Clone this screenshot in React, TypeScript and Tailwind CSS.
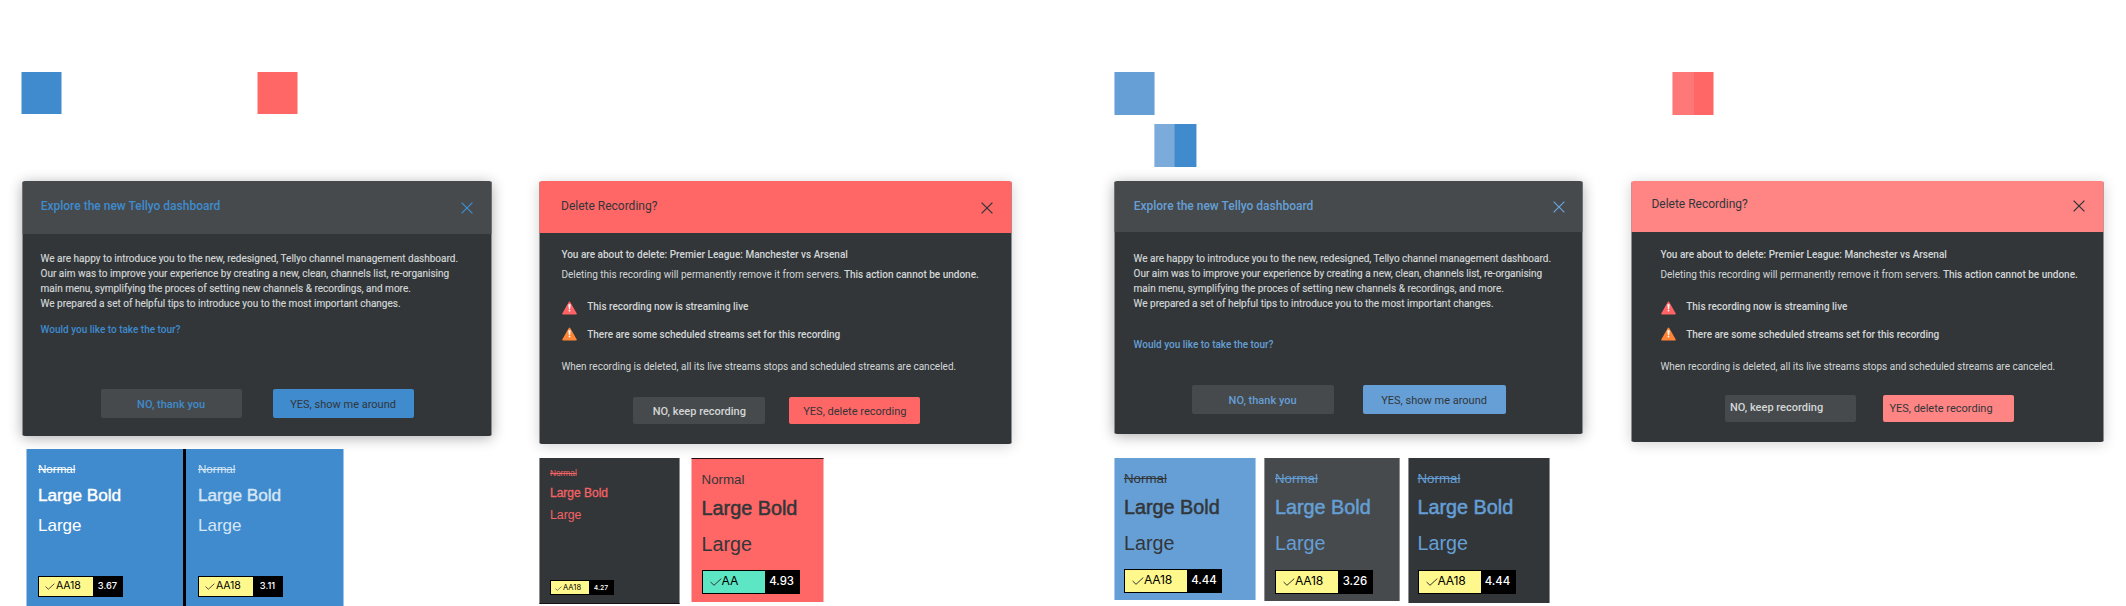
import type { ReactNode } from "react";
import clsx from "clsx";

function CloseIcon({ className }: { className: string }) {
  return (
    <svg viewBox="0 0 12 12" className={clsx("h-3 w-3 shrink-0", className)} fill="none" stroke="currentColor" strokeWidth="1.3">
      <path d="M0.6 0.6 11.4 11.4M11.4 0.6 0.6 11.4" />
    </svg>
  );
}

function WarningIcon({ className }: { className: string }) {
  return (
    <svg viewBox="0 0 15 14" className={clsx("-mb-1 h-3.5 w-[15px] shrink-0", className)}>
      <path d="M6.8 1.1Q7.5 0.1 8.2 1.1L14.6 12.2Q15 13.4 13.8 13.4H1.2Q0 13.4 0.4 12.2Z" fill="currentColor" />
      <path d="M6.3 3.2H8.7L8.1 8.2H6.9Z" fill="#fff" />
      <circle cx="7.5" cy="9.6" r="0.9" fill="#fff" />
    </svg>
  );
}

function Dialog({
  className,
  headerClass,
  title,
  titleClass,
  closeClass,
  bodyClass,
  children,
}: {
  className: string;
  headerClass: string;
  title: string;
  titleClass: string;
  closeClass: string;
  bodyClass: string;
  children: ReactNode;
}) {
  return (
    <section className={clsx("flex flex-col overflow-hidden rounded-[3px]", className)}>
      <header className={clsx("flex shrink-0 items-start justify-between border-x", headerClass)}>
        <h2 className={clsx("text-[12px] leading-4", titleClass)}>{title}</h2>
        <CloseIcon className={closeClass} />
      </header>
      <div
        className={clsx(
          "flex grow flex-col border-x border-[#8b8e90] bg-[#323639] text-[10px] leading-[15px] whitespace-nowrap text-[#d3d6d7]",
          bodyClass,
        )}
      >
        {children}
      </div>
    </section>
  );
}

function Button({ className, children }: { className: string; children: ReactNode }) {
  return <button className={clsx("rounded-[2px] text-[11px] leading-[15px]", className)}>{children}</button>;
}

function Intro() {
  return (
    <p className="[-webkit-text-stroke:0.15px_currentColor]">
      We are happy to introduce you to the new, redesigned, Tellyo channel management dashboard.
      <br />
      Our aim was to improve your experience by creating a new, clean, channels list, re-organising
      <br />
      main menu, symplifying the proces of setting new channels &amp; recordings, and more.
      <br />
      We prepared a set of helpful tips to introduce you to the most important changes.
    </p>
  );
}

function DeleteDetails() {
  return (
    <>
      <p className="font-medium">You are about to delete: Premier League: Manchester vs Arsenal</p>
      <p className="mt-[5px]">
        Deleting this recording will permanently remove it from servers.{" "}
        <span className="font-medium">This action cannot be undone.</span>
      </p>
      <p className="mt-[17px] flex items-start gap-[10.5px] pl-[0.3px] font-medium">
        <WarningIcon className="mt-[2px] text-[#ff6365]" />
        This recording now is streaming live
      </p>
      <p className="mt-[13px] flex items-start gap-[10.5px] pl-[0.3px] font-medium">
        <WarningIcon className="text-[#ff8536]" />
        There are some scheduled streams set for this recording
      </p>
      <p className="mt-[17px]">When recording is deleted, all its live streams stops and scheduled streams are canceled.</p>
    </>
  );
}

type Size = "sm" | "md" | "lg";

const sampleStyles = {
  sm: {
    normal: "text-[8.3px] leading-[10px]",
    bold: "mt-2 text-[12px] leading-[14px] [-webkit-text-stroke:0.3px_currentColor]",
    large: "mt-2 text-[12.3px] leading-[14px]",
    badge: "h-[15px] w-16 text-[7.6px] leading-[9px]",
    grade: "w-[38px] pl-1 pt-[2px]",
    check: "mt-[3px] h-[5px] w-[7px]",
    label: "ml-[1px]",
    value: "pt-[2px] text-[6.8px]",
  },
  md: {
    normal: "text-[11.6px] leading-[13px]",
    bold: "mt-2.5 text-[17.2px] leading-5 [-webkit-text-stroke:0.4px_currentColor]",
    large: "mt-[11px] text-[17px] leading-5",
    badge: "h-[21px] w-[85px] text-[10.6px] leading-[13px]",
    grade: "w-[54px] pl-[6px] pt-[2px]",
    check: "mt-[4px] h-[7px] w-[10px]",
    label: "ml-[1px] tracking-[-0.2px]",
    value: "pt-[2px] text-[9.3px]",
  },
  lg: {
    normal: "text-[13.3px] leading-4",
    bold: "mt-2 text-[19.8px] leading-6 [-webkit-text-stroke:0.5px_currentColor]",
    large: "mt-3 text-[19.7px] leading-6",
    badge: "h-6 w-[98px] text-[12.2px] leading-[15px]",
    grade: "w-[62px] pl-[7px] pt-[2px]",
    check: "mt-[5px] h-[8px] w-[12px]",
    label: "tracking-[-0.3px]",
    value: "pt-[3px] text-[11.4px]",
  },
};

function ContrastCard({
  className,
  size,
  grade,
  ratio,
  struck = true,
  gradeClass = "bg-[#fff88c]",
}: {
  className: string;
  size: Size;
  grade: string;
  ratio: string;
  struck?: boolean;
  gradeClass?: string;
}) {
  const s = sampleStyles[size];
  return (
    <div className={clsx("flex shrink-0 flex-col font-['Liberation_Sans',sans-serif] whitespace-nowrap", className)}>
      <p className={clsx(s.normal, struck && "line-through")}>Normal</p>
      <p className={s.bold}>Large Bold</p>
      <p className={s.large}>Large</p>
      <div className={clsx("mt-auto flex border border-black bg-black font-['Inter',sans-serif]", s.badge)}>
        <div className={clsx("flex items-start text-black", s.grade, gradeClass)}>
          <svg viewBox="0 0 12 8" className={clsx("shrink-0", s.check)} fill="none" stroke="#333" strokeWidth="1">
            <path d="M0.6 4 4 7.3 11.3 0.6" />
          </svg>
          <span className={s.label}>{grade}</span>
        </div>
        <div className={clsx("grow text-center font-medium text-white", s.value)}>{ratio}</div>
      </div>
    </div>
  );
}

export default function App() {
  return (
    <main className="flex h-[606px] w-[2126px] overflow-hidden bg-white font-['Roboto',sans-serif]">
      <div className="flex w-[539px] shrink-0 flex-col pl-[21px]">
        <div className="flex h-[181px] shrink-0 gap-[195px] pt-[72px]">
          <div className="h-[42px] w-[41px] border-x border-[#9fc4e6] bg-[#3f8bce]" />
          <div className="h-[42px] w-[41px] border-x border-[#ffb2b2] bg-[#ff6666]" />
        </div>
        <Dialog
          className="ml-px h-[255px] w-[470px] shadow-[0_2px_14px_rgba(0,0,0,0.32)]"
          headerClass="h-[53px] border-[#6f7375] bg-[#464a4c] pl-[17px] pr-[18px] text-[#3f8bce]"
          title="Explore the new Tellyo dashboard"
          titleClass="mt-[17px] pl-[0.7px] font-medium"
          closeClass="mt-[21px]"
          bodyClass="pt-[17px] pl-[17.6px]"
        >
          <Intro />
          <p className="mt-[11px] font-medium text-[#3f8bce]">Would you like to take the tour?</p>
          <div className="mt-[52px] flex gap-[31px] pl-[60px]">
            <Button className="h-[29px] w-[141px] bg-[#464a4c] pt-px font-medium text-[#3f8bce]">NO, thank you</Button>
            <Button className="h-[29px] w-[141px] bg-[#3f8bce] pt-px text-[#323639]">YES, show me around</Button>
          </div>
        </Dialog>
        <div className="mt-[13px] ml-[5px] flex h-[157px] text-white">
          <ContrastCard size="md" grade="AA18" ratio="3.67" className="w-[157px] border-l border-[#9fc4e6] bg-[#3f8bce] pt-[13px] pb-[9px] pl-[11px]" />
          <div className="w-[3px] bg-black" />
          <ContrastCard size="md" grade="AA18" ratio="3.11" className="w-[158px] border-r border-[#9fc4e6] bg-[#3f8bce] pt-[13px] pb-[9px] pl-3 text-[#d6e6f5]" />
        </div>
      </div>

      <div className="flex w-[575px] shrink-0 flex-col pt-[181px]">
        <Dialog
          className="h-[263px] w-[473px] shadow-[0_2px_14px_rgba(0,0,0,0.18)]"
          headerClass="h-[52px] border-[#c97f80] bg-[#ff6666] pl-[21px] pr-[18px] text-[#323639]"
          title="Delete Recording?"
          titleClass="mt-[17px]"
          closeClass="mt-[21px]"
          bodyClass="pt-[14px] pl-[21.4px]"
        >
          <DeleteDetails />
          <div className="mt-[23px] flex gap-6 pl-[72px]">
            <Button className="h-[27px] w-[132px] bg-[#464a4c] pt-px font-medium">NO, keep recording</Button>
            <Button className="h-[27px] w-[131px] bg-[#ff6666] pt-px text-[#323639]">YES, delete recording</Button>
          </div>
        </Dialog>
        <div className="mt-3.5 flex items-start gap-[11px]">
          <ContrastCard size="sm" grade="AA18" ratio="4.27" className="h-[146px] w-[141px] border-x border-b border-x-[#8b8e90] border-b-[#1c1014] bg-[#323639] pt-2.5 pb-2 pl-2.5 text-[#f56365]" />
          <ContrastCard size="lg" grade="AA" ratio="4.93" struck={false} gradeClass="bg-[#5ce6c4]" className="h-36 w-[133px] border-x border-t border-x-[#ffb2b2] border-t-[#1c1014] bg-[#ff6666] pt-[13px] pb-2 pl-[9.6px] text-[#323639]" />
        </div>
      </div>

      <div className="flex w-[517px] shrink-0 flex-col">
        <div className="flex h-[181px] shrink-0 flex-col pt-[72px]">
          <div className="h-[43px] w-[41px] border-x border-[#a9cbe9] bg-[#659fd6]" />
          <div className="mt-[9px] ml-10 flex h-[43px] w-[43px] border-x border-[#a9cbe9] bg-[#3f8bce]">
            <div className="w-5 border-r border-[#5f9dd5] bg-[#7aabdb]" />
          </div>
        </div>
        <Dialog
          className="h-[253px] w-[469px] shadow-[0_2px_14px_rgba(0,0,0,0.32)]"
          headerClass="h-[51px] border-[#6f7375] bg-[#464a4c] pl-[18px] pr-[17.5px] text-[#659fd6]"
          title="Explore the new Tellyo dashboard"
          titleClass="mt-[17px] pl-[0.7px] font-medium"
          closeClass="mt-5"
          bodyClass="pt-[19px] pl-[18.6px]"
        >
          <Intro />
          <p className="mt-[26px] font-medium text-[#659fd6]">Would you like to take the tour?</p>
          <div className="mt-[33px] flex gap-[29px] pl-[58px]">
            <Button className="h-[29px] w-[142px] bg-[#464a4c] pt-px font-medium text-[#659fd6]">NO, thank you</Button>
            <Button className="h-[29px] w-[143px] bg-[#659fd6] pt-px text-[#323639]">YES, show me around</Button>
          </div>
        </Dialog>
        <div className="mt-6 flex items-start">
          <ContrastCard size="lg" grade="AA18" ratio="4.44" className="h-[142px] w-[142px] border-x border-[#a9cbe9] bg-[#659fd6] pt-[13px] pb-[7px] pl-[9px] text-[#323639]" />
          <ContrastCard size="lg" grade="AA18" ratio="3.26" className="ml-2 h-[143px] w-[136px] border-x border-[#8b8e90] bg-[#464a4c] pt-[13px] pb-[7px] pl-2.5 text-[#659fd6]" />
          <ContrastCard size="lg" grade="AA18" ratio="4.44" className="ml-2 h-[145px] w-[142px] border-x border-[#8b8e90] bg-[#323639] pt-[13px] pb-[9px] pl-[8.5px] text-[#659fd6]" />
        </div>
      </div>

      <div className="flex w-[495px] shrink-0 flex-col">
        <div className="h-[181px] shrink-0 pt-[72px] pl-[41px]">
          <div className="flex h-[43px] w-[42px] border-x border-[#ffb2b2] bg-[#ff6666]">
            <div className="w-[21px] bg-[#ff7878]" />
          </div>
        </div>
        <Dialog
          className="h-[261px] w-[473px] shadow-[0_2px_14px_rgba(0,0,0,0.18)]"
          headerClass="h-[51px] border-[#cd8f90] bg-[#ff8484] pl-[19.4px] pr-[18.5px] text-[#323639]"
          title="Delete Recording?"
          titleClass="mt-[15px]"
          closeClass="mt-[19px]"
          bodyClass="pt-[15px] pl-[28.4px]"
        >
          <DeleteDetails />
          <div className="mt-[21px] flex gap-[27px] pl-[64.6px]">
            <Button className="h-[27px] w-[131px] bg-[#464a4c] pb-[3px] pl-[5px] text-left font-medium">NO, keep recording</Button>
            <Button className="h-[27px] w-[131px] bg-[#ff8484] pb-px pl-[6.4px] text-left text-[#323639]">YES, delete recording</Button>
          </div>
        </Dialog>
      </div>
    </main>
  );
}
